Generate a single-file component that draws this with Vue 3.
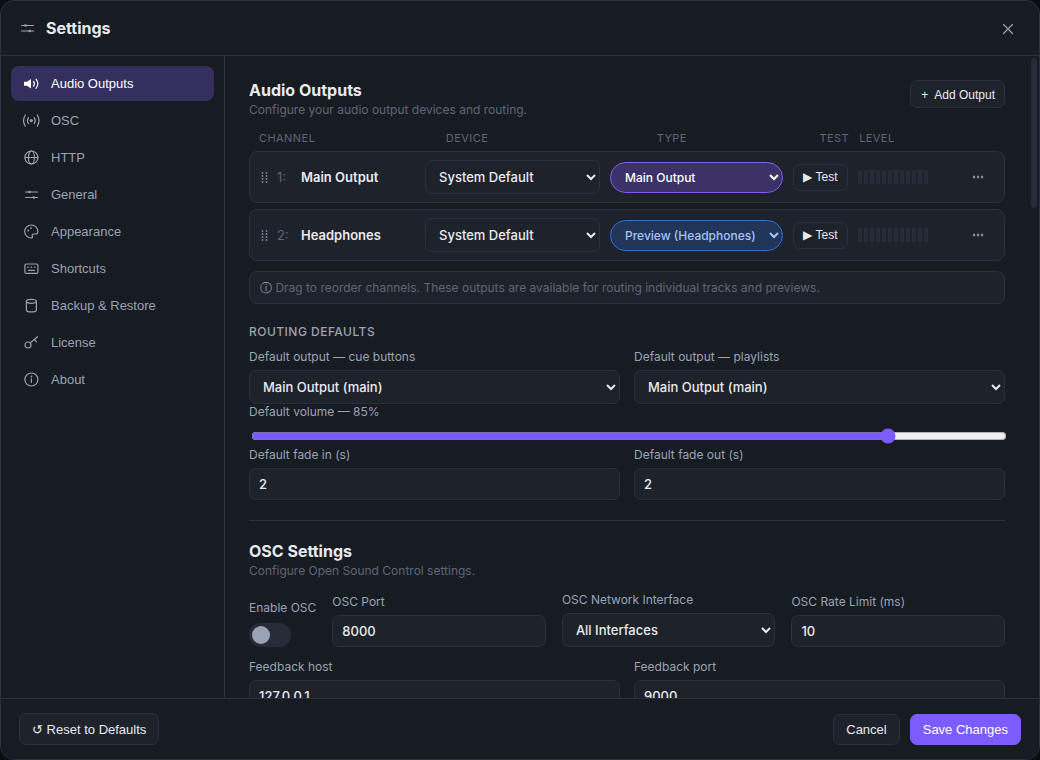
<script setup>
/**
 * App.vue
 * Settings dialog: section navigation, audio outputs, routing defaults and OSC options.
 */
import { ref, reactive } from 'vue'

const activeSection = ref('audio')

const sections = [
  { id: 'audio', label: 'Audio Outputs' },
  { id: 'osc', label: 'OSC' },
  { id: 'http', label: 'HTTP' },
  { id: 'general', label: 'General' },
  { id: 'appearance', label: 'Appearance' },
  { id: 'shortcuts', label: 'Shortcuts' },
  { id: 'backup', label: 'Backup & Restore' },
  { id: 'license', label: 'License' },
  { id: 'about', label: 'About' }
]

const channels = reactive([
  { id: 1, name: 'Main Output', device: 'default', type: 'main' },
  { id: 2, name: 'Headphones', device: 'default', type: 'preview' }
])

const routing = reactive({ cue: 'main', playlist: 'main', volume: 85, fadeIn: 2, fadeOut: 2 })

const osc = reactive({
  enabled: false,
  port: 8000,
  networkInterface: 'all',
  rateLimit: 10,
  feedbackHost: '127.0.0.1',
  feedbackPort: 9000
})
</script>

<template>
  <div class="settings-modal" role="dialog" aria-labelledby="settings-title">
    <header class="modal-header">
      <svg class="icon title-icon" viewBox="0 0 16 16">
        <path d="M2.500 5.500h12M2.500 11h12" />
        <circle class="fill" cx="6.500" cy="5.500" r="1.300" />
        <circle class="fill" cx="10.800" cy="11" r="1.300" />
      </svg>
      <h1 id="settings-title">Settings</h1>
      <button class="close-btn" type="button" aria-label="Close">
        <svg class="icon" viewBox="0 0 16 16">
          <path d="M3.500 4.500l9 9M12.500 4.500l-9 9" />
        </svg>
      </button>
    </header>

    <div class="modal-body">
      <nav class="sidebar">
        <button
          v-for="section in sections"
          :key="section.id"
          type="button"
          class="nav-item"
          :class="{ active: activeSection === section.id }"
          @click="activeSection = section.id"
        >
          <svg class="icon" viewBox="0 0 16 16">
            <template v-if="section.id === 'audio'">
              <path class="fill" d="M1 5.800h3L8 3v9.600l-4-2.800H1z" />
              <path d="M10.500 5.400q1.800 2.400 0 4.800M13 3.200q3.600 4.600 0 9.200" />
            </template>
            <template v-else-if="section.id === 'osc'">
              <circle class="fill" cx="8.300" cy="7.600" r="1.600" />
              <path d="M5.400 4.600q-2 3 0 6M11.200 4.600q2 3 0 6M2.300 2q-3.400 5.600 0 11.200M14.300 2q3.400 5.600 0 11.200" />
            </template>
            <template v-else-if="section.id === 'http'">
              <circle cx="8.400" cy="7.500" r="6.500" />
              <ellipse cx="8.400" cy="7.500" rx="3" ry="6.500" />
              <path d="M2 7.500h13" />
            </template>
            <template v-else-if="section.id === 'general'">
              <path d="M2.500 5h12M2.500 10.500h12" />
              <circle class="fill" cx="6.500" cy="5" r="1.300" />
              <circle class="fill" cx="10.800" cy="10.500" r="1.300" />
            </template>
            <template v-else-if="section.id === 'appearance'">
              <path d="M8.200 1a6.500 6.500 0 1 0 0 13c1.300 0 1.500-1 1.100-1.900-.5-1.200.1-2.100 1.300-2.100h2.200c1.300 0 2.100-.8 2.100-2.200 0-3.900-2.900-6.800-6.700-6.800z" />
              <circle class="fill" cx="5.300" cy="6.500" r=".9" />
              <circle class="fill" cx="8" cy="4.100" r=".9" />
            </template>
            <template v-else-if="section.id === 'shortcuts'">
              <rect x="1.900" y="3" width="13" height="9.400" rx="1.500" />
              <path d="M4.600 6.200h.6M8 6.200h.6M11.400 6.200h.6M5.500 9.300h6" />
            </template>
            <template v-else-if="section.id === 'backup'">
              <ellipse cx="8.400" cy="3.300" rx="5" ry="2" />
              <path d="M3.400 3.300v8.600c0 1.100 2.200 2 5 2s5-.9 5-2V3.300" />
            </template>
            <template v-else-if="section.id === 'license'">
              <circle cx="5" cy="10" r="3" />
              <path d="M7.200 7.900L14.500 1.800M11.400 4.500l2 2.300" />
            </template>
            <template v-else>
              <circle cx="8.400" cy="7.500" r="6.500" />
              <path d="M8.400 6.800v3.700" />
              <circle class="fill" cx="8.400" cy="4.500" r=".9" />
            </template>
          </svg>
          <span>{{ section.label }}</span>
        </button>
      </nav>

      <main class="content">
        <!-- Audio outputs -->
        <section class="section">
          <div class="section-header">
            <div>
              <h2>Audio Outputs</h2>
              <p>Configure your audio output devices and routing.</p>
            </div>
            <button class="btn btn-small" type="button"><span>+</span> Add Output</button>
          </div>

          <div class="channel-head">
            <span>Channel</span>
            <span>Device</span>
            <span>Type</span>
            <span>Test</span>
            <span>Level</span>
          </div>

          <div class="channel-list">
            <div v-for="channel in channels" :key="channel.id" class="channel-row">
              <svg class="drag-handle" viewBox="0 0 7 12">
                <template v-for="y in [2, 5, 8, 11]" :key="y">
                  <circle cx="2.500" :cy="y" r="0.9" />
                  <circle cx="6.500" :cy="y" r="0.9" />
                </template>
              </svg>
              <span class="channel-number">{{ channel.id }}:</span>
              <span class="channel-name">{{ channel.name }}</span>
              <select v-model="channel.device" class="field" :aria-label="channel.name + ' device'">
                <option value="default">System Default</option>
              </select>
              <select v-model="channel.type" class="type-select" :class="channel.type" :aria-label="channel.name + ' type'">
                <option value="main">Main Output</option>
                <option value="preview">Preview (Headphones)</option>
              </select>
              <button class="btn btn-test" type="button">▶ Test</button>
              <div class="level-meter">
                <i v-for="n in 12" :key="n"></i>
              </div>
              <button class="more-btn" type="button" aria-label="More">⋯</button>
            </div>
          </div>

          <p class="hint"><span class="hint-icon">ⓘ</span> Drag to reorder channels. These outputs are available for routing individual tracks and previews.</p>

          <h3>Routing Defaults</h3>
          <div class="two-cols">
            <div class="form-group">
              <label for="cue-output">Default output — cue buttons</label>
              <select id="cue-output" v-model="routing.cue" class="field">
                <option value="main">Main Output (main)</option>
              </select>
            </div>
            <div class="form-group">
              <label for="playlist-output">Default output — playlists</label>
              <select id="playlist-output" v-model="routing.playlist" class="field">
                <option value="main">Main Output (main)</option>
              </select>
            </div>
          </div>
          <div class="form-group">
            <label for="volume">Default volume — {{ routing.volume }}%</label>
            <input id="volume" v-model.number="routing.volume" class="slider" type="range" min="0" max="100">
          </div>
          <div class="two-cols">
            <div class="form-group">
              <label for="fade-in">Default fade in (s)</label>
              <input id="fade-in" v-model="routing.fadeIn" class="field" type="number">
            </div>
            <div class="form-group">
              <label for="fade-out">Default fade out (s)</label>
              <input id="fade-out" v-model="routing.fadeOut" class="field" type="number">
            </div>
          </div>
        </section>

        <!-- OSC -->
        <section class="section osc-section">
          <div class="section-header">
            <div>
              <h2>OSC Settings</h2>
              <p>Configure Open Sound Control settings.</p>
            </div>
          </div>
          <div class="osc-grid">
            <div class="form-group toggle-group">
              <label for="osc-enabled">Enable OSC</label>
              <input id="osc-enabled" v-model="osc.enabled" class="toggle" type="checkbox">
            </div>
            <div class="form-group">
              <label for="osc-port">OSC Port</label>
              <input id="osc-port" v-model="osc.port" class="field" type="number">
            </div>
            <div class="form-group">
              <label for="osc-interface">OSC Network Interface</label>
              <select id="osc-interface" v-model="osc.networkInterface" class="field">
                <option value="all">All Interfaces</option>
              </select>
            </div>
            <div class="form-group">
              <label for="osc-rate">OSC Rate Limit (ms)</label>
              <input id="osc-rate" v-model="osc.rateLimit" class="field" type="number">
            </div>
          </div>
          <div class="two-cols">
            <div class="form-group">
              <label for="feedback-host">Feedback host</label>
              <input id="feedback-host" v-model="osc.feedbackHost" class="field" type="text">
            </div>
            <div class="form-group">
              <label for="feedback-port">Feedback port</label>
              <input id="feedback-port" v-model="osc.feedbackPort" class="field" type="number">
            </div>
          </div>
        </section>
      </main>
      <div class="scroll-thumb"></div>
    </div>

    <footer class="modal-footer">
      <button class="btn reset-btn" type="button">↺ Reset to Defaults</button>
      <button class="btn" type="button">Cancel</button>
      <button class="btn btn-primary" type="button">Save Changes</button>
    </footer>
  </div>
</template>

<style>
body { margin: 0; background: #0b0d11; }
</style>

<style scoped>
* { box-sizing: border-box; }
h1, h2, h3, p { margin: 0; }
button { margin: 0; font-family: 'Liberation Sans', Arial, sans-serif; }
input, select { margin: 0; font-family: inherit; }

.settings-modal {
  --panel: #171b22;
  --raised: #1e222a;
  --border: #2a3040;
  --meter: #282c38;
  --text: #e8eaf0;
  --text-dim: #9aa3b5;
  --text-muted: #5f6678;
  --accent: #7c5cff;
  display: flex;
  flex-direction: column;
  height: 100vh;
  background: var(--panel);
  border: 1px solid var(--border);
  border-radius: 14px;
  overflow: hidden;
  color: var(--text);
  font-family: Inter, 'Liberation Sans', sans-serif;
  font-size: 13px;
}

.icon { width: 16px; height: 16px; flex: none; fill: none; stroke: currentColor; stroke-width: 1.2; stroke-linecap: round; stroke-linejoin: round; overflow: visible; }
.icon .fill { fill: currentColor; stroke: none; }

/* Header */
.modal-header { display: flex; align-items: center; height: 55px; flex: none; padding: 0 16px 0 18px; border-bottom: 1px solid var(--border); }
.title-icon { color: var(--text-dim); margin-right: 11px; }
.modal-header h1 { font-size: 16px; font-weight: 700; line-height: 20px; }
.close-btn { display: flex; align-items: center; justify-content: center; width: 30px; height: 30px; margin-left: auto; padding: 0; border: 0; background: none; color: var(--text-dim); }

/* Navigation */
.modal-body { position: relative; display: flex; flex: 1; min-height: 0; overflow: hidden; }
.sidebar { display: flex; flex-direction: column; gap: 2px; width: 224px; flex: none; padding: 10px; border-right: 1px solid var(--border); }
.nav-item { display: flex; align-items: center; gap: 12px; height: 35px; padding: 0 12px; border: 0; border-radius: 8px; background: none; color: var(--text-dim); font-size: 13px; font-weight: 500; text-align: left; }
.nav-item.active { background: #352f5e; color: #fff; }

/* Content */
.content { flex: 1; min-width: 0; padding: 24px 34px 24px 24px; }
.scroll-thumb { position: absolute; top: 2px; right: 2px; width: 6px; height: 150px; border-radius: 3px; background: var(--meter); }
.section-header { display: flex; align-items: flex-start; justify-content: space-between; }
h2 { font-size: 16px; font-weight: 700; line-height: 20px; }
.section-header p { margin-top: 2px; color: var(--text-muted); font-size: 12px; line-height: 16px; }

.btn { height: 31px; padding: 0 12px; border: 1px solid var(--border); border-radius: 7px; background: var(--raised); color: var(--text); font-size: 13px; font-weight: 500; white-space: nowrap; }
.btn-small { display: flex; align-items: center; gap: 6px; height: 28px; padding: 1px 9px 0 10px; font-size: 12px; }
.btn-test { height: 27px; padding: 0 8px; font-size: 12px; }
.btn-primary { border-color: var(--accent); background: var(--accent); color: #fff; }

.channel-head { display: grid; grid-template-columns: 177fr 201fr 153fr 29fr 136fr; gap: 10px; margin-top: 12px; padding: 0 10px; color: var(--text-muted); font-size: 11px; line-height: 16px; letter-spacing: 0.04em; text-transform: uppercase; }
.channel-list { display: flex; flex-direction: column; gap: 6px; margin-top: 5px; }
.channel-row { display: grid; grid-template-columns: 7px 14px 114fr 175fr 173fr 55px 94fr 32px; gap: 10px; align-items: center; padding: 8px 10px; border: 1px solid var(--border); border-radius: 8px; background: var(--raised); }
.drag-handle { width: 7px; height: 12px; fill: #7d8598; overflow: visible; }
.channel-number { color: var(--text-muted); }
.channel-name { font-weight: 600; }
.level-meter { display: flex; gap: 2px; }
.level-meter i { width: 4px; height: 14px; border-radius: 1px; background: var(--meter); }
.more-btn { padding: 0; height: 27px; border: 0; background: none; color: var(--text-dim); font-size: 12px; font-weight: 700; }

.field { width: 100%; padding: 0 9px; border: 1px solid var(--border); border-radius: 7px; background: var(--raised); color: var(--text); font-size: 13px; font-weight: 500; }
select.field { height: 34px; padding-right: 1px; }
input.field { height: 32px; appearance: textfield; }
.type-select { width: 100%; height: 31px; padding: 0 1px 0 10px; border: 1px solid; border-radius: 16px; font-size: 12px; font-weight: 500; }
.type-select.main { border-color: var(--accent); background: #3d3268; color: #fff; }
.type-select.preview { border-color: #2f6fe0; background: #213559; color: #a5c3ff; }

.hint { margin-top: 10px; padding: 8px 10px; border: 1px solid var(--border); border-radius: 8px; background: var(--raised); color: var(--text-muted); font-size: 12px; line-height: 15px; }
.hint-icon { color: var(--text-dim); }
h3 { margin: 20px 0 10px; color: var(--text-dim); font-size: 12px; font-weight: 500; line-height: 15px; letter-spacing: 0.04em; text-transform: uppercase; }

.two-cols { display: grid; grid-template-columns: 1fr 1fr; gap: 14px; }
.form-group { display: flex; flex-direction: column; gap: 6px; min-width: 0; }
.form-group label { color: var(--text-dim); font-size: 12px; line-height: 15px; }
.slider { height: 16px; margin: 3px -2px 3px 2px; accent-color: var(--accent); }

.osc-section { margin-top: 20px; padding-top: 20px; border-top: 1px solid var(--border); }
.osc-grid { display: grid; grid-template-columns: auto 1fr 1fr 1fr; align-items: end; gap: 16px; margin: 13px 0 12px; }
.toggle-group { gap: 8px; }
.toggle { width: 42px; height: 24px; margin: 0; padding: 3px; appearance: none; border-radius: 12px; background: var(--meter); }
.toggle::before { content: ''; display: block; width: 18px; height: 18px; border-radius: 50%; background: var(--text-dim); }
.toggle:checked { background: var(--accent); }
.toggle:checked::before { margin-left: 18px; background: #fff; }

/* Footer */
.modal-footer { display: flex; align-items: center; gap: 10px; height: 61px; flex: none; padding: 0 18px; border-top: 1px solid var(--border); background: var(--panel); }
.reset-btn { height: 32px; margin-right: auto; }
</style>
